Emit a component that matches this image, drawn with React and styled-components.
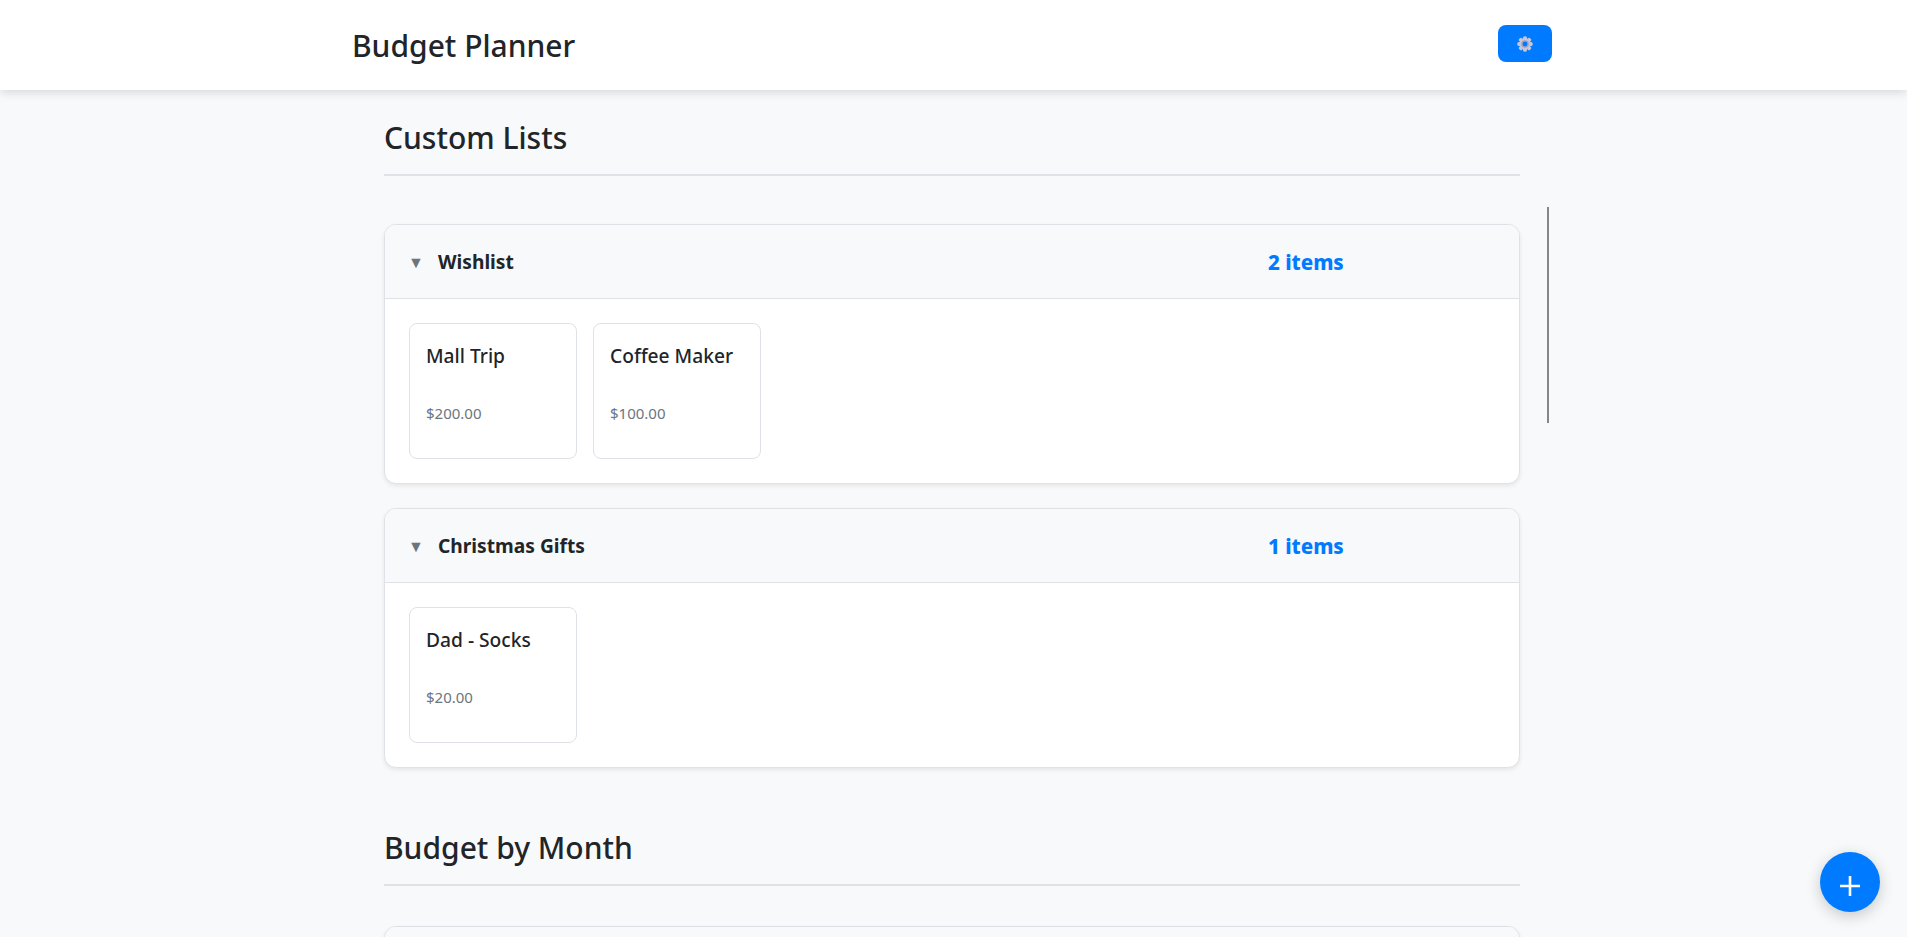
import styled, { createGlobalStyle } from 'styled-components';

const GlobalStyle = createGlobalStyle`
    * {
        box-sizing: border-box;
    }
    html, body {
        margin: 0;
        height: 100%;
        overflow: hidden;
    }
    body {
        background: #f8f9fa;
        color: #212529;
        font-family: "Noto Sans", "Open Sans", sans-serif;
    }
`;

const lists = [
    {
        name: 'Wishlist',
        items: [
            { title: 'Mall Trip', price: '$200.00' },
            { title: 'Coffee Maker', price: '$100.00' },
        ],
    },
    {
        name: 'Christmas Gifts',
        items: [{ title: 'Dad - Socks', price: '$20.00' }],
    },
];

const GearIcon = () => (
    <svg width="16" height="16" viewBox="0 0 24 24" aria-hidden="true">
        <g fill="#c6c6da">
            {[0, 45, 90, 135].map((angle) => (
                <rect key={angle} x="9" y="0.5" width="6" height="23" rx="2.4" transform={`rotate(${angle} 12 12)`} />
            ))}
            <circle cx="12" cy="12" r="8.5" />
        </g>
        <circle cx="12" cy="12" r="5.8" fill="#a3a3c0" />
        <circle cx="12" cy="12" r="3.6" fill="#007bff" />
    </svg>
);

const App = () => {
    return (
        <>
            <GlobalStyle />
            <Header>
                <HeaderInner>
                    <AppTitle>Budget Planner</AppTitle>
                    <SettingsButton aria-label="Settings">
                        <GearIcon />
                    </SettingsButton>
                </HeaderInner>
            </Header>
            <Main>
                <Section>
                    <SectionTitle>Custom Lists</SectionTitle>
                    <ListStack $top={48}>
                        <ScrollMark />
                        {lists.map((list) => (
                            <ListCard key={list.name}>
                                <ListHeader>
                                    <Caret>▼</Caret>
                                    <ListName>{list.name}</ListName>
                                    <ItemCount>{list.items.length} items</ItemCount>
                                </ListHeader>
                                <ListBody>
                                    {list.items.map((item) => (
                                        <ItemCard key={item.title}>
                                            <ItemTitle>{item.title}</ItemTitle>
                                            <ItemPrice>{item.price}</ItemPrice>
                                        </ItemCard>
                                    ))}
                                </ListBody>
                            </ListCard>
                        ))}
                    </ListStack>
                </Section>
                <Section>
                    <SectionTitle>Budget by Month</SectionTitle>
                    <ListStack $top={40}>
                        <ListCard>
                            <ListHeader />
                        </ListCard>
                    </ListStack>
                </Section>
            </Main>
            <AddButton aria-label="Add">
                <svg width="20" height="20" viewBox="0 0 20 20" aria-hidden="true">
                    <path d="M10 0v20M0 10h20" stroke="#fff" strokeWidth="2.6" />
                </svg>
            </AddButton>
        </>
    );
};

const Header = styled.header`
    height: 90px;
    background: #fff;
    box-shadow: 0 2px 10px rgba(0, 0, 0, 0.15);
`;

const HeaderInner = styled.div`
    width: 1203px;
    height: 100%;
    margin: 0 auto;
    padding-right: 3px;
    display: flex;
    align-items: center;
    justify-content: space-between;
`;

const AppTitle = styled.h1`
    margin: 2px 0 0;
    font-size: 30px;
    font-weight: 500;
    line-height: 1.2;
`;

const SettingsButton = styled.button`
    width: 54px;
    height: 37px;
    margin-bottom: 3px;
    padding: 0;
    border: none;
    border-radius: 8px;
    background: #007bff;
    display: flex;
    align-items: center;
    justify-content: center;
`;

const Main = styled.main`
    width: 1139px;
    margin: 0 auto;
    padding: 24px 3px 0 0;
    display: flex;
    flex-direction: column;
    gap: 56px;
`;

const Section = styled.section`
    display: flex;
    flex-direction: column;
`;

const SectionTitle = styled.h2`
    margin: 0;
    padding-bottom: 12px;
    border-bottom: 2px solid #dee2e6;
    font-size: 30px;
    font-weight: 500;
    line-height: 48px;
`;

const ListStack = styled.div`
    position: relative;
    margin-top: ${(props) => props.$top}px;
    display: flex;
    flex-direction: column;
    gap: 24px;
`;

const ScrollMark = styled.div`
    position: absolute;
    top: -17px;
    right: -29px;
    width: 2px;
    height: 216px;
    background: #868686;
`;

const ListCard = styled.article`
    border: 1px solid #dee2e6;
    border-radius: 12px;
    background: #fff;
    box-shadow: 0 2px 4px rgba(0, 0, 0, 0.08);
    overflow: hidden;
`;

const ListHeader = styled.div`
    height: 74px;
    padding: 0 24px;
    display: flex;
    align-items: center;
    background: #f8f9fa;
    border-bottom: 1px solid #dee2e6;
`;

const Caret = styled.span`
    width: 30px;
    margin-left: -1px;
    font-size: 16px;
    line-height: 1;
    color: #6c757d;
`;

const ListName = styled.h3`
    flex: 1;
    margin: 0;
    font-size: 19.2px;
    font-weight: 700;
`;

const ItemCount = styled.span`
    width: 227px;
    font-size: 20.5px;
    font-weight: 800;
    color: #007bff;
`;

const ListBody = styled.div`
    padding: 24px;
    display: flex;
    gap: 16px;
`;

const ItemCard = styled.div`
    width: 168px;
    height: 136px;
    padding: 16px;
    border: 1px solid #dee2e6;
    border-radius: 8px;
`;

const ItemTitle = styled.h4`
    margin: 0 0 30px;
    font-size: 19.2px;
    font-weight: 500;
    line-height: 32px;
`;

const ItemPrice = styled.p`
    margin: 0;
    font-size: 15px;
    line-height: 22px;
    color: #6c757d;
`;

const AddButton = styled.button`
    position: fixed;
    right: 27px;
    bottom: 25px;
    width: 60px;
    height: 60px;
    padding: 7px 0 0;
    border: none;
    border-radius: 50%;
    background: #007bff;
    box-shadow: 0 4px 15px rgba(0, 0, 0, 0.2);
    display: flex;
    align-items: center;
    justify-content: center;
`;

export default App;
